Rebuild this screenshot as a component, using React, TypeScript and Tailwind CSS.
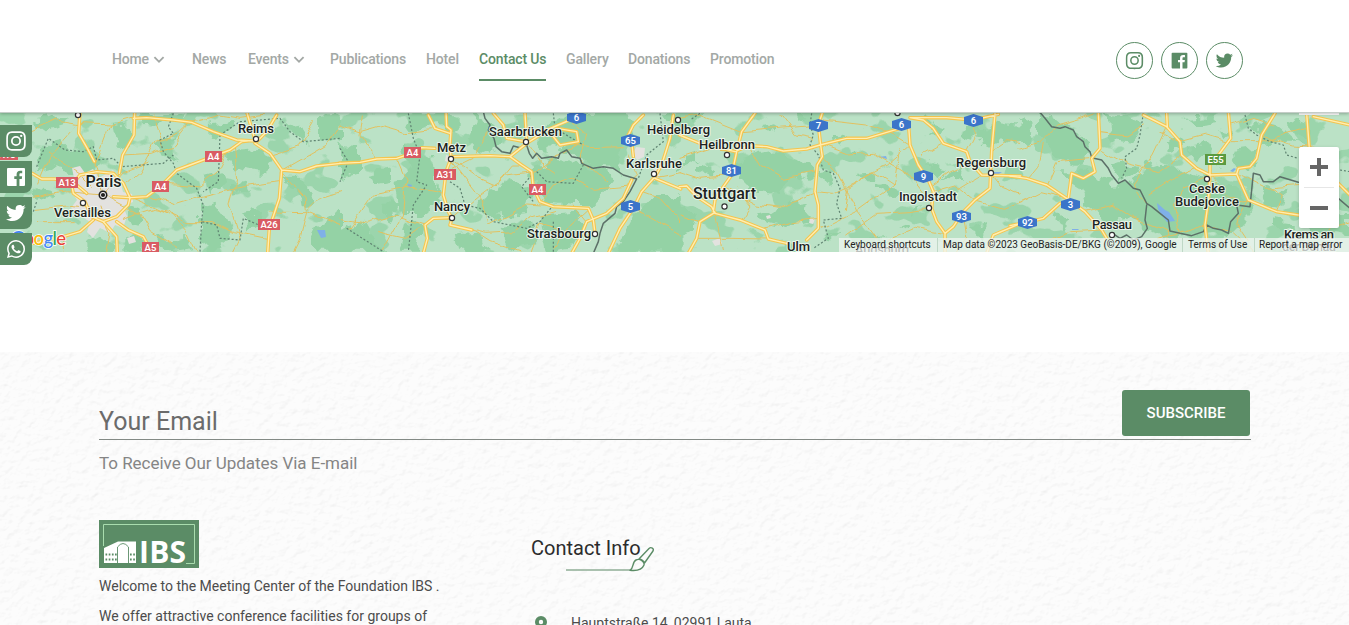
import React from "react";
import {
  BiLogoInstagram,
  BiLogoFacebookSquare,
  BiLogoTwitter,
  BiLogoWhatsapp,
  BiChevronDown,
} from "react-icons/bi";

const NAV = [
  { label: "Home", width: "w-[80px]", menu: true },
  { label: "News", width: "w-[56px]" },
  { label: "Events", width: "w-[82px]", menu: true },
  { label: "Publications", width: "w-[96px]" },
  { label: "Hotel", width: "w-[53px]" },
  { label: "Contact Us", width: "w-[87px]", active: true },
  { label: "Gallery", width: "w-[62px]" },
  { label: "Donations", width: "w-[82px]" },
  { label: "Promotion", width: "w-[80px]" },
];

type Tile = { x: number; forest: string; roads: string; local: string; dashed: string; border: string };

// Each tile is drawn at three times its size on the page.
const TILES: Tile[] = [
  {
    x: 0,
    forest:
      "M100 205L120 150L165 95L200 130L270 140L300 170L270 205L200 200L150 190ZM335 60L385 55L395 100L350 130ZM655 165L700 140L770 135L830 165L800 200L740 190L690 180ZM470 110L520 100L530 165L490 150ZM415 25L560 25L540 60L430 50ZM600 300L640 290L670 330L700 400L640 440L600 410ZM730 330L780 320L770 360L740 380ZM260 420L300 400L340 430L330 445L265 445ZM370 395L430 400L420 440L370 440ZM850 215L890 215L940 250L930 300L880 260ZM940 360L1020 320L1020 440L950 440L930 400ZM850 60L900 50L920 110L870 90ZM960 30L1020 25L1020 120L960 100ZM620 60L700 50L690 80L630 90ZM620 200L660 190L670 250L630 270ZM390 310L420 320L410 350L390 340ZM480 400L560 390L580 430L500 440ZM690 240L740 230L750 260L700 275ZM100 240L150 245L140 290L110 300ZM210 50L160 30L110 40L150 70Z",
    roads:
      "M240 20L236 85L262 130L283 170M404 20L402 90L368 150L358 205M96 205L125 222L165 222L230 240L260 265M340 275L390 278L440 275L480 245L530 195L610 165L690 135L725 110L765 105M765 105L740 20M770 110L800 80L830 30M765 115L810 145L845 195L838 280L808 370L803 445M845 195L900 200L950 183L1022 175M310 350L350 395L352 445M280 345L240 380L190 395L100 415M350 350L385 375L430 395L450 430L470 445M400 40L440 38L520 45L575 52L640 80L710 105L765 108M215 240L220 265L255 290L275 335L310 350L350 335L385 300L390 278L370 235L340 205L290 200L240 210L215 240",
    local:
      "M140 140L235 205L280 250M0 90L80 85L170 45L230 55L330 60L400 40M230 60L150 150L110 240M575 52L520 120L460 145L370 150L350 215M575 52L545 80L470 110L420 200L375 240M575 52L660 30L720 40L840 25M845 200L880 240L915 280L920 322L1022 362M805 318L920 320L960 280L1022 260M100 310L200 300L300 310M390 275L450 300L560 350L640 350L700 380L800 400M450 270L520 300L620 270L700 250L840 230M480 230L600 240L650 200L680 140M370 340L460 310L510 320L560 380L590 445M310 270L370 200L450 170M310 270L420 330L450 380L530 430M310 270L200 260L100 280M310 270L285 180L330 60M300 300L330 390L320 445M220 350L110 350M700 130L710 220L690 300L720 400L700 440M840 200L980 120L1020 60M920 322L900 400L880 440M190 395L195 445M490 120L460 30M810 150L900 120L940 50",
    dashed:
      "M520 25L505 65L520 85L480 105L490 140L520 175L530 205L590 250L610 300L605 350L650 360L660 400L720 405L730 340L800 370M110 185L145 100L195 135L250 140L280 125L290 165L340 160L365 185L490 175L520 150M660 90L720 50L840 40L870 80L910 110L1020 100M660 90L655 230L610 260M100 320L110 290M605 350L600 440",
    border: "",
  },
  {
    x: 340,
    forest:
      "M200 25L350 25L350 70L310 85L290 60L210 90L190 60ZM185 120L280 160L290 250L260 330L180 330L160 240L200 190ZM0 120L60 130L60 200L0 220ZM400 30L470 60L480 130L430 150L390 110ZM600 100L640 60L700 20L860 20L880 90L830 150L850 200L780 190L700 140L620 130ZM580 190L640 170L720 175L800 200L820 240L760 300L690 300L610 290L580 250ZM440 260L520 220L580 270L560 330L450 340L420 300ZM200 350L250 350L240 440L180 440ZM0 380L80 350L130 440L0 440ZM600 330L700 320L740 360L700 430L620 440ZM880 330L960 270L1022 270L1022 440L830 440ZM960 25L1022 25L1022 60L980 60ZM350 390L420 380L440 440L360 440ZM90 200L150 190L150 230L100 240ZM140 280L180 300L160 350L130 320ZM480 360L580 350L590 410L520 430ZM300 240L310 300L270 290Z",
    roads:
      "M-2 175L60 172L110 162L170 160L215 145L245 128L285 130M333 155L450 152L510 155L545 180L575 200L580 250L600 290L640 305L745 310L760 345L765 385M265 30L285 70L330 85M318 20L320 65L333 75L330 120L333 160L318 200L310 270L325 320L336 340L330 360L395 375M250 445L262 400L255 360L280 340L330 338M510 155L560 115L600 90L620 75L690 45M460 25L490 60L500 100L555 110M555 25L560 110M875 225L850 280L800 325L740 350L720 400L695 445M1000 30L990 100L965 180L945 215L905 260L880 310L840 370L805 445M860 100L880 60L910 30M875 110L880 155M945 220L1022 252M650 70L710 80L715 110L660 120L640 95",
    local:
      "M333 160L400 210L470 240L520 180L545 180M700 120L750 128L850 125M333 165L430 290L450 360L560 300L640 305M395 375L440 385L520 380L570 340L650 320M0 340L80 355L170 330L255 360M0 60L60 80L130 60L200 80L285 70M110 162L60 90L70 30M170 160L200 230L190 330L130 440M318 200L400 160L450 80M310 270L200 250L100 270L30 370M336 340L420 270L500 210L575 200M255 360L200 400L110 380M395 375L450 410L540 440M745 310L690 360L640 430M765 385L700 390L600 360L570 440M600 290L640 240L700 220L760 250L870 240M575 200L640 160L720 110M690 45L740 90L720 160L800 230M560 110L610 180L640 200M905 260L960 280L1022 350M880 310L1022 390M870 240L890 200L870 150M945 215L1022 200M740 350L700 300",
    dashed:
      "M205 25L220 100L240 150L230 230L260 240L220 300L205 440M0 130L25 170L0 230M20 370L130 440M330 230L360 250L375 300L420 310L460 350L560 370L600 350L640 300M575 210L545 245L580 290M590 200L620 230L700 235L730 180M640 25L645 70L730 120M640 350L640 440M960 25L970 110L920 150L895 220",
    border:
      "M430 20L435 40L450 60L445 75L462 100L468 125L485 140L510 145L520 123L540 128L560 120L568 145L578 160L590 145L605 160L635 155L655 160L660 145L680 135L695 155L720 160L725 175L760 190L790 185L820 190L850 210L890 222L870 260L850 290L830 305L825 325L790 355L780 385L775 410L760 445",
  },
  {
    x: 680,
    forest:
      "M30 25L80 25L50 45ZM165 170L240 150L290 140L360 160L400 200L340 230L290 270L240 260L180 230ZM235 330L330 300L395 290L390 350L320 370L240 350ZM240 60L290 55L280 80ZM450 100L500 90L480 110ZM500 155L540 155L530 165ZM530 200L590 195L600 225L550 225ZM420 190L450 185L470 230L430 240ZM600 240L660 250L650 270L600 265ZM830 90L860 50L900 60L890 110ZM895 80L960 50L1022 60L1022 130L960 100L900 130ZM790 220L830 180L850 230ZM750 180L800 190L780 220ZM690 320L720 310L710 330ZM660 360L700 345L690 370ZM0 300L50 330L40 380L0 390ZM60 180L100 190L60 210ZM0 150L40 140L50 170L0 190ZM560 400L640 390L630 410ZM740 40L800 60L760 90ZM430 400L470 380L460 400ZM870 370L930 360L900 410ZM320 20L380 25L360 45Z",
    roads:
      "M-2 90L60 115L165 140L205 122L260 125L310 138L380 132L420 120L500 100L560 100L610 85L660 70M225 25L185 80L170 140L155 210L130 245L105 285L100 320M428 20L415 60L422 120L427 155L412 180L405 260L415 300L415 370L380 405M-2 245L20 243L50 275L95 305L105 325L180 345L255 375L265 402L320 415M105 322L60 350L50 400L25 445M690 38L730 45L760 70L790 115L860 140L870 170L905 210L1022 213M690 38L800 38L880 45L955 28M685 50L690 120L715 180L745 225L760 260L755 310L770 350L795 385L795 445M795 385L820 365L850 320L885 285L930 250L932 205L935 140L945 25M1022 355L940 390L920 445",
    local:
      "M0 40L60 30L185 80M170 140L90 130L0 160M165 210L60 220L0 200M130 245L230 300L300 310L400 265M405 260L460 265L530 230L620 180L690 120M422 120L500 150L580 145L690 210L730 260M427 155L470 200L530 320L590 400M530 320L430 370M530 320L640 240L660 130M755 310L690 320L590 325L500 390M760 260L830 240L885 285M690 120L640 90L560 60L430 45M790 115L730 150L715 180M860 140L890 80L880 45M870 170L810 200L755 240M905 210L840 250M795 385L700 370L620 405M885 285L970 310L1022 290M932 205L970 250L1022 270M935 140L980 110L1022 115M105 325L130 440M180 345L210 300L170 250M255 375L340 350L415 340M185 80L300 70L415 60M205 122L240 180L310 220L405 200M0 330L60 350M50 400L150 400L265 402M640 240L580 200L500 250L490 320M300 25L350 90L400 100M850 320L860 400L830 440",
    dashed:
      "M395 25L390 60L400 90L390 120L415 150L430 195L460 205L480 250L470 295L485 340L430 345L445 400L400 430M60 25L30 45",
    border: "",
  },
  {
    x: 1020,
    forest:
      "M60 25L110 40L160 80L220 115L210 150L160 180L120 160L60 90ZM250 25L320 40L370 60L340 120L270 110ZM100 190L180 190L270 240L340 235L380 180L440 180L560 220L660 260L690 330L640 380L520 390L420 400L330 340L270 350L200 300L180 240ZM260 170L320 160L350 210L300 240ZM440 100L480 80L500 120L450 140ZM490 35L580 30L600 50L520 60ZM500 130L560 120L590 180L530 160ZM640 140L720 130L710 190L650 190ZM700 60L780 70L830 110L720 110ZM750 340L820 350L830 370L750 365ZM720 240L800 260L790 300L730 290ZM850 330L990 320L990 400L880 380ZM820 40L870 60L860 100L820 80ZM380 180L410 170L420 190ZM0 40L40 60L20 120L0 120ZM600 70L640 80L620 100ZM100 330L160 350L130 380Z",
    roads:
      "M-30 213L20 220L80 240L140 280L195 320L245 375L260 400M-30 362L20 352L70 340L120 295M235 20L240 130L215 160L225 200L190 220L155 205L145 280M370 30L440 65L480 110L485 150L530 190L570 210L650 207L685 285L770 320L835 330M442 65L440 25M625 20L632 100L595 150L575 160M570 180L570 210L565 290L555 360L565 445M765 25L725 90L710 160L690 185L655 190L650 207M860 25L868 130M880 35L990 60M950 230L990 270",
    local:
      "M0 130L60 110L110 60L180 40L235 20M70 110L60 170L20 220M240 80L320 90L370 60M440 65L400 150L340 240L380 300M240 130L330 180L410 200L485 150M485 110L560 90L630 110L720 110L860 70M570 210L500 240L460 300L480 380M570 210L620 270L660 290L685 285M650 207L740 250L860 240L930 210M685 285L650 350L690 410M725 90L820 120L890 125M195 320L280 300L340 340M145 280L60 260L0 290M245 375L150 380L80 410M480 110L420 80M770 320L790 270L760 250M555 360L500 380L410 400M555 360L640 380L700 440M80 240L110 170L215 160M930 370L990 350M632 60L700 40L765 60M340 340L450 380L440 440M530 190L480 210L390 270",
    dashed:
      "M370 25L360 90L350 130L315 155L320 190L305 220M675 30L685 70L710 90L750 110L790 120L800 150L835 160M960 195L990 200",
    border:
      "M60 22L75 40L95 65L120 70L135 65L160 75L170 95L190 110L195 125L210 140L215 158L245 165L265 190L275 210L295 235L315 225L340 250L360 255L380 295L395 305L420 325L445 345L450 378L480 385L515 392L550 380L560 360L580 370L605 375L625 385L632 350L655 325L650 300L690 305L700 205L720 210L730 230L760 230L780 215L835 232M380 300L375 345L382 370L365 395L340 405L320 390L300 400L278 385M955 280L990 310",
  },
];

type City = { name: string; x: number; y: number; w: number; dot?: [number, number]; size?: number };
const CITIES: City[] = [
  { name: "Reims", x: 238, y: 134, w: 36, dot: [256, 139] },
  { name: "Paris", x: 85.5, y: 188, w: 36, size: 16 },
  { name: "Versailles", x: 54, y: 217.5, w: 57, dot: [83, 203] },
  { name: "Metz", x: 437, y: 153, w: 29, dot: [451, 159] },
  { name: "Nancy", x: 434, y: 212, w: 36, dot: [452, 218] },
  { name: "Saarbrücken", x: 489, y: 137, w: 73, dot: [526, 142] },
  { name: "Strasbourg", x: 527, y: 239, w: 64, dot: [595, 234] },
  { name: "Heidelberg", x: 647, y: 135, w: 63, dot: [678, 120] },
  { name: "Karlsruhe", x: 626, y: 169, w: 56, dot: [654, 174] },
  { name: "Heilbronn", x: 699, y: 150, w: 56, dot: [727, 155] },
  { name: "Stuttgart", x: 693, y: 199.5, w: 63, dot: [724.5, 206.5], size: 16 },
  { name: "Ulm", x: 787, y: 252, w: 23 },
  { name: "Augsburg", x: 855, y: 255, w: 54 },
  { name: "Ingolstadt", x: 899, y: 202, w: 58, dot: [929, 208] },
  { name: "Regensburg", x: 956, y: 168, w: 70, dot: [991, 173] },
  { name: "Passau", x: 1092, y: 230, w: 40, dot: [1112, 235] },
  { name: "Ceske", x: 1189, y: 194, w: 36, dot: [1207, 179] },
  { name: "Budejovice", x: 1175, y: 207, w: 64 },
  { name: "Krems an", x: 1284, y: 240, w: 50 },
  { name: "der Donau", x: 1282, y: 252, w: 54 },
];

const RED = "#d95b63";
const BLUE = "#3b74c9";
const SHIELDS: { t: string; x: number; y: number; w: number; c: string }[] = [
  { t: "A4", x: 205, y: 151, w: 17, c: RED },
  { t: "A13", x: 56, y: 177, w: 22, c: RED },
  { t: "A4", x: 152, y: 181, w: 17, c: RED },
  { t: "A26", x: 258, y: 219, w: 22, c: RED },
  { t: "A5", x: 142, y: 242, w: 17, c: RED },
  { t: "A13", x: -4, y: 149, w: 22, c: RED },
  { t: "A4", x: 404, y: 147, w: 17, c: RED },
  { t: "A31", x: 434, y: 169, w: 22, c: RED },
  { t: "A4", x: 529, y: 184, w: 17, c: RED },
  { t: "6", x: 567, y: 112, w: 19, c: BLUE },
  { t: "65", x: 621, y: 135, w: 19, c: BLUE },
  { t: "5", x: 621, y: 201, w: 19, c: BLUE },
  { t: "81", x: 722, y: 165, w: 19, c: BLUE },
  { t: "7", x: 809, y: 120, w: 19, c: BLUE },
  { t: "6", x: 892, y: 119, w: 19, c: BLUE },
  { t: "6", x: 964, y: 115, w: 19, c: BLUE },
  { t: "9", x: 914, y: 171, w: 19, c: BLUE },
  { t: "93", x: 952, y: 211, w: 19, c: BLUE },
  { t: "92", x: 1018, y: 217, w: 19, c: BLUE },
  { t: "3", x: 1061, y: 199, w: 19, c: BLUE },
  { t: "E55", x: 1205, y: 154, w: 21, c: "#5b9a3f" },
];

function MapCanvas() {
  return (
    <svg viewBox="0 113 1349 139" className="block h-[139px] w-[1349px]" fontFamily="Roboto, sans-serif">
      <defs>
        <filter id="wobble" x="-5%" y="-5%" width="110%" height="110%">
          <feTurbulence type="fractalNoise" baseFrequency="0.06" numOctaves={3} seed={4} />
          <feDisplacementMap in="SourceGraphic" scale={20} xChannelSelector="R" yChannelSelector="G" />
        </filter>
        <filter id="wander" x="-5%" y="-5%" width="110%" height="110%">
          <feTurbulence type="fractalNoise" baseFrequency="0.05" numOctaves={2} seed={9} />
          <feDisplacementMap in="SourceGraphic" scale={9} xChannelSelector="R" yChannelSelector="G" />
        </filter>
        <filter id="patches" x="0" y="0" width="100%" height="100%" colorInterpolationFilters="sRGB">
          <feTurbulence type="fractalNoise" baseFrequency="0.03 0.04" numOctaves={3} seed={21} />
          <feColorMatrix values="0 0 0 0 0.58  0 0 0 0 0.825  0 0 0 0 0.65  26 0 0 0 -15.6" />
        </filter>
      </defs>
      <rect y="113" width="1349" height="139" fill="#bbe2c6" />
      <rect y="113" width="1349" height="139" filter="url(#patches)" opacity="0.8" />
      <g filter="url(#wobble)">
        {TILES.map((t) => (
          <path key={t.x} d={t.forest} transform={`translate(${t.x} 105) scale(.33333)`} fill="#94d2a5" />
        ))}
      </g>
      <g fill="#e3e2df">
        <path d="M72 168l8-2 5 7 8-4 6 9 14-8 7 10 3 12 9 2 1 8-10 4 4 10-4 12-8-3-5 8-10-5-7 10-6-6 3-10-12-8-7-6 6-8-6-10 4-7z" />
        <path d="M636 147l9 1-1 9-7 3-4-6zM650 172l6-4 4 8-6 5zM712 241l8-3 2 6-7 2zM810 218l5 1-2 5-4-1zM446 155l6 2-1 6-6-2zM127 238l7-2 2 6-7 2zM766 216l4-1 1 3-4 1z" />
      </g>
      <g fill="#7fb0e8">
        <path d="M317 230l8 0 1 7-5 1zM408 184l4 1-1 3-3-1zM878 157l8-1 1 3-4-1zM994 172l8 0-3 2-5 0zM1157 203l8 7 4 2 6 9-8 1-5-6-4-7zM1234 168l2 1-3 3-3-1zM1072 229l7 0-1 1-6 0z" />
      </g>
      <g filter="url(#wander)" fill="none" strokeLinejoin="round" strokeLinecap="round">
        {TILES.map((t) => (
          <path key={t.x} d={t.local} transform={`translate(${t.x} 105) scale(.33333)`} stroke="#e2c15f" strokeWidth="3" />
        ))}
      </g>
      <g fill="none" strokeLinejoin="round" strokeLinecap="round">
        {TILES.map((t) => (
          <g key={t.x} transform={`translate(${t.x} 105) scale(.33333)`}>
            <path d={t.dashed} stroke="#5f8371" strokeWidth="3.6" strokeDasharray="6 6" strokeLinecap="butt" />
            <path d={t.border} stroke="#5c7068" strokeWidth="4.5" />
          </g>
        ))}
        {TILES.map((t) => (
          <path key={t.x} d={t.roads} transform={`translate(${t.x} 105) scale(.33333)`} stroke="#f5c54e" strokeWidth="10.5" />
        ))}
        {TILES.map((t) => (
          <path key={t.x} d={t.roads} transform={`translate(${t.x} 105) scale(.33333)`} stroke="#ffeeb0" strokeWidth="4.2" />
        ))}
      </g>
      {SHIELDS.map((s, i) => (
        <g key={i}>
          {s.c === BLUE ? (
            <path d={`M${s.x} ${s.y + 2}L${s.x + s.w / 2} ${s.y - 1}L${s.x + s.w} ${s.y + 2}V${s.y + 9}L${s.x + s.w / 2} ${s.y + 12}L${s.x} ${s.y + 9}Z`} fill={s.c} />
          ) : (
            <rect x={s.x} y={s.y} width={s.w} height="11" fill={s.c} />
          )}
          <text x={s.x + s.w / 2} y={s.y + 9} textAnchor="middle" fontSize="9.5" fontWeight="600" fill="#fff">
            {s.t}
          </text>
        </g>
      ))}
      {[...CITIES.flatMap((c) => (c.dot ? [c.dot] : [])), [78, 115], [897.5, 113]].map(([x, y], i) => (
        <circle key={i} cx={x} cy={y} r="2.6" fill="#fff" stroke="#333" strokeWidth="1.2" />
      ))}
      <circle cx="103" cy="195" r="3.7" fill="#fff" stroke="#222" strokeWidth="1.6" />
      <circle cx="103" cy="195" r="2.1" fill="#222" />
      {CITIES.map((c) => (
        <text
          key={c.name}
          x={c.x}
          y={c.y - 0.8}
          textLength={c.w}
          fontSize={c.size ?? 13}
          fontWeight="500"
          fill="#1d2321"
          stroke="#f2faf4"
          strokeWidth="2"
          strokeOpacity="0.85"
          paintOrder="stroke"
          strokeLinejoin="round"
        >
          {c.name}
        </text>
      ))}
      <text x="11" y="245" fontSize="18.500" fontFamily="Lato, sans-serif" fontWeight="500" textLength="55" stroke="#fff" strokeWidth="1.5" paintOrder="stroke">
        <tspan fill="#4285f4">G</tspan>
        <tspan fill="#ea4335">o</tspan>
        <tspan fill="#fbbc05">o</tspan>
        <tspan fill="#4285f4">g</tspan>
        <tspan fill="#34a853">l</tspan>
        <tspan fill="#ea4335">e</tspan>
      </text>
    </svg>
  );
}

function Plaster() {
  return (
    <svg className="absolute inset-0 h-full w-full" preserveAspectRatio="none">
      <filter id="plaster" x="0" y="0" width="100%" height="100%" colorInterpolationFilters="sRGB">
        <feTurbulence type="fractalNoise" baseFrequency="0.13 0.15" numOctaves={3} seed={7} result="n" />
        <feColorMatrix in="n" values="0 0 0 0 0 0 0 0 0 0 0 0 0 0 0 1 0 0 0 0" result="h" />
        <feDiffuseLighting in="h" surfaceScale="0.8" diffuseConstant="1.15" lightingColor="#fff">
          <feDistantLight azimuth={235} elevation={60} />
        </feDiffuseLighting>
      </filter>
      <rect width="100%" height="100%" fill="#fcfcfc" />
      <rect width="100%" height="100%" filter="url(#plaster)" opacity="0.22" />
    </svg>
  );
}

function Logo() {
  return (
    <svg viewBox="0 0 100 48" className="block h-12 w-[100px]">
      <rect width="100" height="48" fill="#5b8c66" />
      <path d="M4.5 26V4.5H95.5V43.5H87" fill="none" stroke="#a9dcae" strokeWidth="1" />
      <path d="M5 43V28L19 21.500H37V43Z" fill="#fff" />
      <path d="M18.500 43V27Q24 20 29.500 27V43" fill="#fff" stroke="#5b8c66" strokeWidth="0.9" />
      <g fill="#5b8c66">
        {[6.5, 9.7, 12.900, 16, 31, 34.200].map((x) => (
          <React.Fragment key={x}>
            <rect x={x} y="33.500" width="1.7" height="2" />
            <rect x={x} y="38.500" width="1.7" height="2" />
          </React.Fragment>
        ))}
      </g>
      <text x="40" y="43" textLength="47" fontFamily="'Open Sans', sans-serif" fontSize="30" fontWeight="700" fill="#fff">
        IBS
      </text>
    </svg>
  );
}

const SIDE = [
  { Icon: BiLogoInstagram, size: "h-[26px] w-[26px]" },
  { Icon: BiLogoFacebookSquare, size: "h-6 w-6" },
  { Icon: BiLogoTwitter, size: "h-6 w-6" },
  { Icon: BiLogoWhatsapp, size: "h-6 w-6" },
];
const TOP = [
  { Icon: BiLogoInstagram, size: "h-[23px] w-[23px]" },
  { Icon: BiLogoFacebookSquare, size: "h-[21px] w-[21px]" },
  { Icon: BiLogoTwitter, size: "h-[21px] w-[21px]" },
];

export default function App() {
  return (
    <div className="relative h-[625px] w-[1349px] overflow-hidden bg-white font-['Roboto',sans-serif]">
      <header className="relative z-10 flex h-[113px] items-start justify-between border-b border-[#c4cdc7] bg-white pl-[112px] pr-[106px] shadow-[0_1px_3px_rgba(0,0,0,0.25)]">
        <nav className="flex pt-[48px] text-[14px] font-medium leading-[22px] tracking-[-0.15px] text-[#a3a8a5]">
          {NAV.map((n) => (
            <div key={n.label} className={`${n.width} flex shrink-0 items-start whitespace-nowrap`}>
              <span className={n.active ? "h-[33px] border-b-2 border-[#5b8c66] text-[#5b8c66]" : ""}>{n.label}</span>
              {n.menu && <BiChevronDown className="-ml-px h-[22px] w-[22px]" />}
            </div>
          ))}
        </nav>
        <div className="flex gap-2 pt-[42px]">
          {TOP.map(({ Icon, size }, i) => (
            <a key={i} className="flex h-[37px] w-[37px] items-center justify-center rounded-full border border-[#5b8c66] text-[#5b8c66]">
              <Icon className={`shrink-0 ${size}`} />
            </a>
          ))}
        </div>
      </header>

      <section className="relative h-[139px] overflow-hidden">
        <MapCanvas />
        <div className="absolute right-[10px] top-0 h-[2px] w-10 bg-white" />
        <div className="absolute right-[10px] top-[34px] flex h-[81px] w-10 flex-col items-center rounded-[2px] bg-white shadow-[0_1px_4px_-1px_rgba(0,0,0,0.3)]">
          <svg viewBox="0 0 40 81" className="h-[81px] w-10">
            <path d="M18 11h4v7h7v4h-7v7h-4v-7h-7v-4h7zM11 59h18v4H11z" fill="#666" />
            <path d="M5 40.500h30" stroke="#e6e6e6" />
          </svg>
        </div>
        <div className="absolute bottom-0 right-0 flex h-[14px] items-center whitespace-nowrap bg-[#f0f5f1]/75 text-[10px] leading-[14px] text-[#222]">
          <span className="w-[98px] pl-[5px]">Keyboard shortcuts</span>
          <span className="w-[245px] border-l border-[#bfd8c6] pl-[5px]">Map data ©2023 GeoBasis-DE/BKG (©2009), Google</span>
          <span className="w-[72px] border-l border-[#bfd8c6] pl-[5px]">Terms of Use</span>
          <span className="w-[95px] border-l border-[#bfd8c6] pl-[4px]">Report a map error</span>
        </div>
      </section>

      <div className="h-[100px]" />

      <footer className="relative h-[273px] overflow-hidden">
        <Plaster />
        <div className="relative ml-[99px] w-[1152px]">
          <div className="flex h-[88px] items-start justify-between border-b border-[#838a85] pr-px pt-[38px]">
            <span className="pt-[15px] text-[25px] leading-[34px] text-[#6b6b6b]">Your Email</span>
            <button className="h-[46px] w-[128px] rounded-[3px] bg-[#5b8c66] text-[15px] font-medium text-white">SUBSCRIBE</button>
          </div>
          <p className="pt-[11px] text-[17px] leading-6 tracking-[-0.03px] text-[#858585]">To Receive Our Updates Via E-mail</p>
          <div className="mt-[45px] flex">
            <div className="w-[432px]">
              <Logo />
              <p className="mt-[3px] w-[360px] text-[14px] leading-[30px] text-[#4c4c4c]">
                Welcome to the Meeting Center of the Foundation IBS .
                <br />
                We offer attractive conference facilities for groups of
              </p>
            </div>
            <div className="pt-[12px]">
              <div className="relative h-[48px] w-[130px]">
                <h3 className="whitespace-nowrap text-[20px] leading-8 text-[#2c2c2c]">Contact Info</h3>
                <svg viewBox="0 0 92 28" className="absolute left-[34px] top-[13px] h-7 w-[92px]" fill="none" stroke="#5b8c66" strokeWidth="1.4" strokeLinejoin="round">
                  <path d="M1 25H65" strokeWidth="1.300" stroke="#8fae96" />
                  <path d="M65 25.300C69 23 67 17 71 15C75 13 80 17 79 20C77 25 71 26 65 25.300ZM74 14L84 3.500C86 1.500 89.500 3.500 88 6L79.500 18M74 14Q78 14.500 79.500 18" />
                </svg>
              </div>
              <div className="mt-[32px] flex items-center text-[14px] leading-[22px] text-[#4c4c4c]">
                <svg viewBox="0 0 12 16" className="ml-[4px] mr-[24px] mt-[2px] h-4 w-3">
                  <path fillRule="evenodd" fill="#5b8c66" d="M6 0a6 6 0 0 1 6 6c0 3-3 6.500-6 10C3 12.500 0 9 0 6a6 6 0 0 1 6-6zm0 3.800a2.200 2.200 0 1 0 0 4.400a2.200 2.200 0 0 0 0-4.400z" />
                </svg>
                Hauptstraße 14, 02991 Lauta
              </div>
            </div>
          </div>
        </div>
      </footer>

      <aside className="absolute left-0 top-[125px] z-20 flex flex-col gap-1">
        {SIDE.map(({ Icon, size }, i) => (
          <a key={i} className="flex h-8 w-8 items-center justify-center rounded-br-[8px] bg-[#5b8c66] text-white">
            <Icon className={`shrink-0 ${size}`} />
          </a>
        ))}
      </aside>
    </div>
  );
}
